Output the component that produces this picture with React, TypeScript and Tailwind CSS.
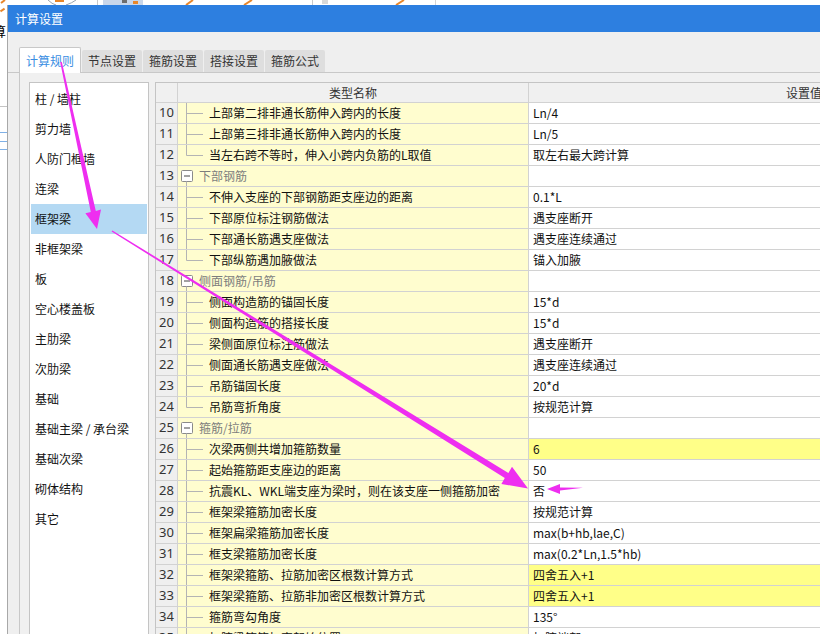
import React from 'react'

type Row =
  | { n: number; kind: 'group'; label: string }
  | { n: number; kind: 'item'; label: string; value: string; hl?: boolean; last?: boolean }

const rows: Row[] = [
  { n: 10, kind: 'item', label: '上部第二排非通长筋伸入跨内的长度', value: 'Ln/4' },
  { n: 11, kind: 'item', label: '上部第三排非通长筋伸入跨内的长度', value: 'Ln/5' },
  { n: 12, kind: 'item', label: '当左右跨不等时，伸入小跨内负筋的L取值', value: '取左右最大跨计算', last: true },
  { n: 13, kind: 'group', label: '下部钢筋' },
  { n: 14, kind: 'item', label: '不伸入支座的下部钢筋距支座边的距离', value: '0.1*L' },
  { n: 15, kind: 'item', label: '下部原位标注钢筋做法', value: '遇支座断开' },
  { n: 16, kind: 'item', label: '下部通长筋遇支座做法', value: '遇支座连续通过' },
  { n: 17, kind: 'item', label: '下部纵筋遇加腋做法', value: '锚入加腋', last: true },
  { n: 18, kind: 'group', label: '侧面钢筋/吊筋' },
  { n: 19, kind: 'item', label: '侧面构造筋的锚固长度', value: '15*d' },
  { n: 20, kind: 'item', label: '侧面构造筋的搭接长度', value: '15*d' },
  { n: 21, kind: 'item', label: '梁侧面原位标注筋做法', value: '遇支座断开' },
  { n: 22, kind: 'item', label: '侧面通长筋遇支座做法', value: '遇支座连续通过' },
  { n: 23, kind: 'item', label: '吊筋锚固长度', value: '20*d' },
  { n: 24, kind: 'item', label: '吊筋弯折角度', value: '按规范计算', last: true },
  { n: 25, kind: 'group', label: '箍筋/拉筋' },
  { n: 26, kind: 'item', label: '次梁两侧共增加箍筋数量', value: '6', hl: true },
  { n: 27, kind: 'item', label: '起始箍筋距支座边的距离', value: '50' },
  { n: 28, kind: 'item', label: '抗震KL、WKL端支座为梁时，则在该支座一侧箍筋加密', value: '否' },
  { n: 29, kind: 'item', label: '框架梁箍筋加密长度', value: '按规范计算' },
  { n: 30, kind: 'item', label: '框架扁梁箍筋加密长度', value: 'max(b+hb,lae,C)' },
  { n: 31, kind: 'item', label: '框支梁箍筋加密长度', value: 'max(0.2*Ln,1.5*hb)' },
  { n: 32, kind: 'item', label: '框架梁箍筋、拉筋加密区根数计算方式', value: '四舍五入+1', hl: true },
  { n: 33, kind: 'item', label: '框架梁箍筋、拉筋非加密区根数计算方式', value: '四舍五入+1', hl: true },
  { n: 34, kind: 'item', label: '箍筋弯勾角度', value: '135°' },
  { n: 35, kind: 'item', label: '加腋梁箍筋加密起始位置', value: '加腋端部' },
]

const categories = [
  '柱 / 墙柱',
  '剪力墙',
  '人防门框墙',
  '连梁',
  '框架梁',
  '非框架梁',
  '板',
  '空心楼盖板',
  '主肋梁',
  '次肋梁',
  '基础',
  '基础主梁 / 承台梁',
  '基础次梁',
  '砌体结构',
  '其它',
]

const tabs = ['计算规则', '节点设置', '箍筋设置', '搭接设置', '箍筋公式']

function TreeItem({ last }: { last?: boolean }) {
  return (
    <svg width="31" height="20" className="flex-none">
      <line x1="8.5" y1="0" x2="8.5" y2={last ? 10.5 : 20} stroke="#b4b4b4" />
      <line x1="8.5" y1="10.5" x2="25" y2="10.5" stroke="#b4b4b4" />
    </svg>
  )
}

function TreeGroup() {
  return (
    <svg width="21" height="20" className="flex-none">
      <rect x="3.5" y="4.5" width="11" height="11" fill="#fff" stroke="#8a8a8a" rx="1" />
      <line x1="6" y1="10" x2="12" y2="10" stroke="#444" />
      <line x1="8.5" y1="15.5" x2="8.5" y2="20" stroke="#b4b4b4" />
    </svg>
  )
}

function TopStrip() {
  return (
    <svg width="820" height="5" className="block flex-none">
      <rect width="820" height="5" fill="#fff" />
      <path d="M1 3 L5 0" stroke="#e8862a" strokeWidth="2" />
      <path d="M48 0 Q52 4 56 5" stroke="#9aa3ad" fill="none" />
      <rect x="55" y="0" width="9" height="2" fill="#e8862a" />
      <path d="M66 5 Q72 3 76 0" stroke="#9aa3ad" fill="none" />
      <rect x="97" y="0" width="1" height="5" fill="#c9c9c9" />
      <rect x="103" y="0" width="40" height="5" fill="#c8d6ea" />
      <rect x="122" y="0" width="5" height="3" fill="#6d6d6d" />
      <rect x="133" y="1" width="5" height="3" fill="#e8862a" />
      <path d="M186 5 L193 0" stroke="#e8862a" strokeWidth="2" />
      <path d="M244 5 L252 0" stroke="#e8862a" strokeWidth="2" />
      <rect x="312" y="0" width="1" height="5" fill="#c9c9c9" />
      <rect x="322" y="0" width="6" height="4" fill="#d8d8d8" />
      <path d="M396 5 L404 0" stroke="#e8862a" strokeWidth="2" />
      <rect x="435" y="0" width="1" height="5" fill="#d4d4d4" />
    </svg>
  )
}

function LeftStrip() {
  return (
    <div className="w-[7px] flex-none overflow-hidden bg-white flex flex-col">
      <div className="h-[10px] flex items-center">
        <span className="block w-[5px] h-[2px] bg-[#e8862a] rotate-[-35deg]" />
      </div>
      <div className="-ml-[7px] mt-[9px] text-[13px] leading-[14px] text-black whitespace-nowrap">算</div>
      <div className="mt-[68px] h-px bg-[#c4c4c4]" />
      <div className="mt-[25px] h-px bg-[#7fb0e6]" />
      <div className="mt-[8px] h-px bg-[#7fb0e6]" />
      <div className="mt-[7px] h-px bg-[#7fb0e6]" />
    </div>
  )
}

function Arrows() {
  return (
    <svg width="820" height="634" className="absolute inset-0 pointer-events-none">
      <polygon
        fill="#ee2ef0"
        points="60.2,62.2 61.8,61.8 95.8,210.9 101,209.6 97,229 85.4,213.2 90.8,211.9"
      />
      <polygon
        fill="#ee2ef0"
        points="112.4,230.5 508.4,472.9 512,466.8 528,488.5 501.4,484 504.8,478 111.6,231.5"
      />
      <polygon fill="#ee2ef0" points="547,489 560,484 560,487.4 583,487.8 560,490.6 560,494" />
    </svg>
  )
}

export default function App() {
  return (
    <div className="relative w-[820px] h-[634px] overflow-hidden bg-white flex flex-col font-['Microsoft_YaHei','Noto_Sans_CJK_SC',sans-serif] text-[12px] text-[#111]">
      <TopStrip />
      <div className="flex flex-1 min-h-0">
        <LeftStrip />
        <div className="flex-1 min-w-0 flex flex-col border-l border-[#a8a8a8] bg-[#efefef]">
          <div className="h-[27px] flex-none bg-[#2d7fe0] text-white text-[12px] flex items-center pl-[7px]">
            计算设置
          </div>
          <div className="h-[41px] flex-none flex items-end pl-[11px] gap-px border-b border-[#c8c8c8]">
            {tabs.map((t, i) =>
              i === 0 ? (
                <div
                  key={t}
                  className="h-[26px] w-[62px] -mb-px bg-white border border-b-0 border-[#c8c8c8] rounded-t-[2px] flex items-center justify-center text-[#3a8ee2]"
                >
                  {t}
                </div>
              ) : (
                <div
                  key={t}
                  className="h-[22px] w-[60px] bg-[#dedede] rounded-t-[2px] flex items-center justify-center text-[#333]"
                >
                  {t}
                </div>
              ),
            )}
          </div>
          <div className="flex-1 min-h-0 flex ml-[11px] border-l border-[#c8c8c8] bg-[#f0f0f0] pt-[9px] pl-[9px]">
            <div className="w-[120px] flex-none bg-white border border-b-0 border-[#c4c4c4] pt-px px-px">
              {categories.map((c, i) => (
                <div
                  key={c}
                  className={`h-[30px] flex items-center pl-[4px] whitespace-nowrap ${i === 4 ? 'bg-[#b4d9f3]' : ''}`}
                >
                  {c}
                </div>
              ))}
            </div>
            <div className="ml-[6px] w-[930px] flex-none bg-white border-l border-t border-[#c4c4c4] flex flex-col">
              <div className="h-[20px] flex-none flex bg-[#f0f0f0] border-b border-[#d2d2d2] text-[#333]">
                <div className="w-[22px] flex-none border-r border-[#d2d2d2]" />
                <div className="w-[351px] flex-none border-r border-[#d2d2d2] flex items-center justify-center">
                  类型名称
                </div>
                <div className="w-[550px] flex-none flex items-center justify-center">设置值</div>
              </div>
              {rows.map((r) => (
                <div key={r.n} className="h-[21px] flex-none flex border-b border-[#d2d2d2]">
                  <div className="w-[22px] flex-none bg-[#efefef] border-r border-[#d2d2d2] flex items-center justify-center text-[13px] text-[#333] font-['Microsoft_YaHei','Noto_Sans',sans-serif]">
                    {r.n}
                  </div>
                  <div className="w-[351px] flex-none bg-[#fffdcf] border-r border-[#d2d2d2] flex items-center whitespace-nowrap overflow-hidden">
                    {r.kind === 'group' ? (
                      <>
                        <TreeGroup />
                        <span className="text-[#7d7d7d]">{r.label}</span>
                      </>
                    ) : (
                      <>
                        <TreeItem last={r.last} />
                        <span>{r.label}</span>
                      </>
                    )}
                  </div>
                  <div
                    className={`w-[550px] flex-none flex items-center pl-[4px] ${
                      r.kind === 'item' && r.hl ? 'bg-[#ffff88]' : 'bg-white'
                    }`}
                  >
                    {r.kind === 'item' ? r.value : ''}
                  </div>
                </div>
              ))}
            </div>
          </div>
        </div>
      </div>
      <Arrows />
    </div>
  )
}
